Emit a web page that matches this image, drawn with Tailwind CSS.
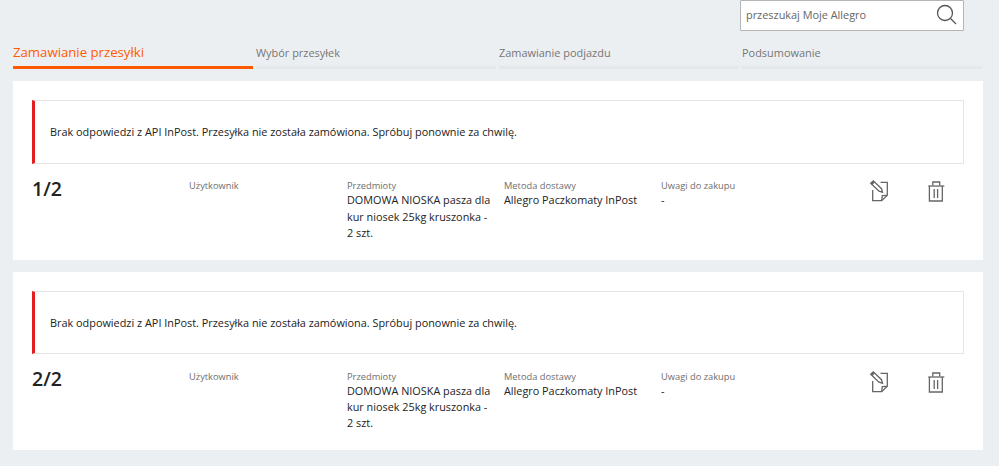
<!DOCTYPE html>
<html lang="pl">
<head>
<meta charset="utf-8">
<script src="https://cdn.jsdelivr.net/npm/@tailwindcss/browser@4"></script>
</head>
<body class="bg-[#eceff2] font-['Open_Sans',sans-serif] text-[#222] overflow-hidden">
<div class="w-[999px] h-[466px] px-[13px] pr-[16px]">
  <div class="flex justify-end pr-[19px] h-[31px]">
    <div class="w-[224px] h-[31px] bg-white border border-[#b5b5b5] rounded-[1px] flex items-center justify-between pl-[5px] pr-[6px]">
      <span class="text-[10.9px] text-[#666]">przeszukaj Moje Allegro</span>
      <svg class="w-[21px] h-[21px] mb-[2px]" viewBox="0 0 21 21" fill="none" stroke="#555" stroke-width="1.3"><circle cx="9" cy="9" r="7.5"/><path d="M14.5 14.5 20 20"/></svg>
    </div>
  </div>
  <div class="grid grid-cols-4 gap-x-[3px] w-[969px] mt-[12px] h-[26px]">
    <div class="border-b-[3px] border-[#ff5a00] text-[13.2px] leading-[19px] text-[#ff5a00]">Zamawianie przesyłki</div>
    <div class="border-b-[3px] border-[#e6e7e9] text-[10.95px] leading-[19px] text-[#767676]">Wybór przesyłek</div>
    <div class="border-b-[3px] border-[#e6e7e9] text-[10.95px] leading-[19px] text-[#767676]">Zamawianie podjazdu</div>
    <div class="border-b-[3px] border-[#e6e7e9] text-[10.95px] leading-[19px] text-[#767676]">Podsumowanie</div>
  </div>
  <section class="w-[970px] h-[179px] bg-white mt-[12px] pt-[19px] px-[19px]">
    <div class="h-[64px] border border-[#e5e5e5] border-l-[3px] border-l-[#e21f1f] pl-[15px] pt-[1px] flex items-center text-[10.88px]">Brak odpowiedzi z API InPost. Przesyłka nie została zamówiona. Spróbuj ponownie za chwilę.</div>
    <div class="grid grid-cols-[157px_158px_157px_157px_209px_64px] mt-[14px]">
      <div class="text-[19.5px] leading-[22px] font-semibold">1/2</div>
      <div class="text-[9.3px] leading-[13px] text-[#6e6e6e] pt-[1px]">Użytkownik</div>
      <div class="pt-[1px] pr-[9px]"><div class="text-[9.3px] leading-[13px] text-[#6e6e6e]">Przedmioty</div><div class="text-[10.85px] leading-[16.5px]">DOMOWA NIOSKA pasza dla kur niosek 25kg kruszonka - 2 szt.</div></div>
      <div class="pt-[1px]"><div class="text-[9.3px] leading-[13px] text-[#6e6e6e]">Metoda dostawy</div><div class="text-[10.85px] leading-[16.5px]">Allegro Paczkomaty InPost</div></div>
      <div class="pt-[1px]"><div class="text-[9.3px] leading-[13px] text-[#6e6e6e]">Uwagi do zakupu</div><div class="text-[10.85px] leading-[16.5px]">-</div></div>
      <div class="flex gap-[37px] pt-[2px] -ml-[1px]">
        <svg class="w-[20px] h-[22px] shrink-0" viewBox="0 0 20 22" fill="none" stroke="#666" stroke-width="1.3"><path d="M3.7 10V20.7H12.7L18.3 15.3V2.3H11.5"/><path d="M12.7 20.7 13.3 15.7 18.3 15.3"/><path d="M1.7 3.3 4.3 .9 12.5 8.7 13.5 12.2 10 11.1Z"/><path d="M2.6 4.2 5 1.7" stroke-width="2"/></svg>
        <svg class="w-[20px] h-[22px] shrink-0" viewBox="0 0 20 22" fill="none" stroke="#666" stroke-width="1.3"><path d="M2.3 6H18.3"/><path d="M6.8 5.5V2H13.7V5.5"/><path d="M3.4 6V21H16.3V6"/><path d="M8.2 9V18M11.6 9V18"/></svg>
      </div>
    </div>
  </section>
  <section class="w-[970px] h-[178px] bg-white mt-[12px] pt-[19px] px-[19px]">
    <div class="h-[63px] border border-[#e5e5e5] border-l-[3px] border-l-[#e21f1f] pl-[15px] pt-[1px] flex items-center text-[10.88px]">Brak odpowiedzi z API InPost. Przesyłka nie została zamówiona. Spróbuj ponownie za chwilę.</div>
    <div class="grid grid-cols-[157px_158px_157px_157px_209px_64px] mt-[15px]">
      <div class="text-[19.5px] leading-[20px] font-semibold">2/2</div>
      <div class="text-[9.3px] leading-[13px] text-[#6e6e6e] pt-[1px]">Użytkownik</div>
      <div class="pt-[1px] pr-[9px]"><div class="text-[9.3px] leading-[13px] text-[#6e6e6e]">Przedmioty</div><div class="text-[10.85px] leading-[16.2px]">DOMOWA NIOSKA pasza dla kur niosek 25kg kruszonka - 2 szt.</div></div>
      <div class="pt-[1px]"><div class="text-[9.3px] leading-[13px] text-[#6e6e6e]">Metoda dostawy</div><div class="text-[10.85px] leading-[16.2px]">Allegro Paczkomaty InPost</div></div>
      <div class="pt-[1px]"><div class="text-[9.3px] leading-[13px] text-[#6e6e6e]">Uwagi do zakupu</div><div class="text-[10.85px] leading-[16.2px]">-</div></div>
      <div class="flex gap-[37px] pt-[2px] -ml-[1px]">
        <svg class="w-[20px] h-[22px] shrink-0" viewBox="0 0 20 22" fill="none" stroke="#666" stroke-width="1.3"><path d="M3.7 10V20.7H12.7L18.3 15.3V2.3H11.5"/><path d="M12.7 20.7 13.3 15.7 18.3 15.3"/><path d="M1.7 3.3 4.3 .9 12.5 8.7 13.5 12.2 10 11.1Z"/><path d="M2.6 4.2 5 1.7" stroke-width="2"/></svg>
        <svg class="w-[20px] h-[22px] shrink-0" viewBox="0 0 20 22" fill="none" stroke="#666" stroke-width="1.3"><path d="M2.3 6H18.3"/><path d="M6.8 5.5V2H13.7V5.5"/><path d="M3.4 6V21H16.3V6"/><path d="M8.2 9V18M11.6 9V18"/></svg>
      </div>
    </div>
  </section>
</div>
</body>
</html>
